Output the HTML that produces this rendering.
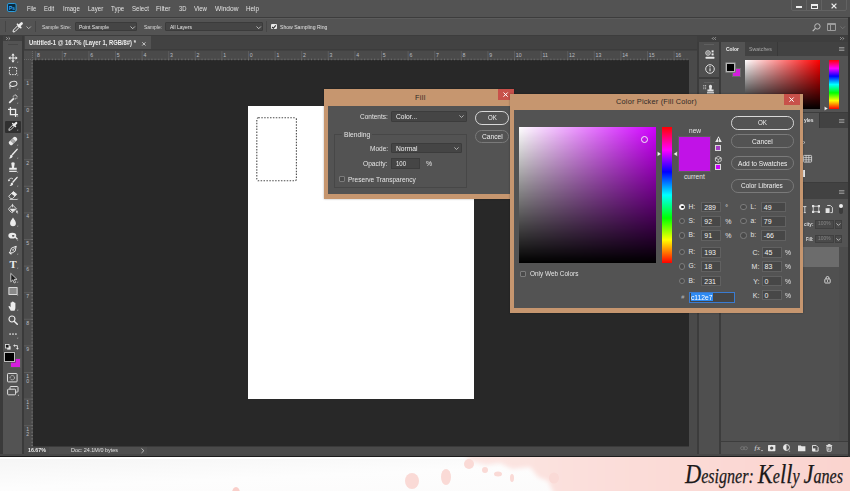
<!DOCTYPE html>
<html><head><meta charset="utf-8"><title>Photoshop - Fill / Color Picker</title>
<style>
*{box-sizing:border-box;margin:0;padding:0}
html,body{width:850px;height:491px;overflow:hidden;background:#fdfcfc}
body{position:relative;font-family:"Liberation Sans",sans-serif;font-size:7px;color:#ddd;line-height:1}
.a{position:absolute}
.t{position:absolute;white-space:nowrap;line-height:1}
svg{overflow:visible}
</style></head><body>
<div class="a" style="left:0.00px;top:0.00px;width:850.00px;height:457.00px;background:#3a3a3a;"></div>
<!-- menu bar -->
<div class="a" style="left:0.00px;top:0.00px;width:850.00px;height:17.00px;background:#535353;"></div>
<div class="a" style="left:0.00px;top:16.50px;width:850.00px;height:1.00px;background:#3d3d3d;"></div>
<svg class="a" style="left:7.20px;top:3.40px;" width="9.6" height="9" viewBox="0 0 9.6 9"><rect x="0.5" y="0.5" width="8.6" height="8" rx="1.4" fill="#0b2c40" stroke="#2c9fe0" stroke-width="1"/><text x="1.9" y="6.6" font-size="5" font-weight="bold" font-family="Liberation Sans, sans-serif" fill="#31a8ff">Ps</text></svg>
<span class="t" style="left:26.90px;top:4.61px;font-size:7.20px;color:#e2e2e2;transform:scaleX(0.8016);transform-origin:0 0;">File</span>
<span class="t" style="left:44.20px;top:4.61px;font-size:7.20px;color:#e2e2e2;transform:scaleX(0.8221);transform-origin:0 0;">Edit</span>
<span class="t" style="left:63.10px;top:4.61px;font-size:7.20px;color:#e2e2e2;transform:scaleX(0.8395);transform-origin:0 0;">Image</span>
<span class="t" style="left:87.80px;top:4.61px;font-size:7.20px;color:#e2e2e2;transform:scaleX(0.8439);transform-origin:0 0;">Layer</span>
<span class="t" style="left:110.70px;top:4.61px;font-size:7.20px;color:#e2e2e2;transform:scaleX(0.8456);transform-origin:0 0;">Type</span>
<span class="t" style="left:131.50px;top:4.61px;font-size:7.20px;color:#e2e2e2;transform:scaleX(0.8495);transform-origin:0 0;">Select</span>
<span class="t" style="left:156.00px;top:4.61px;font-size:7.20px;color:#e2e2e2;transform:scaleX(0.9062);transform-origin:0 0;">Filter</span>
<span class="t" style="left:178.50px;top:4.61px;font-size:7.20px;color:#e2e2e2;transform:scaleX(0.8148);transform-origin:0 0;">3D</span>
<span class="t" style="left:194.00px;top:4.61px;font-size:7.20px;color:#e2e2e2;transform:scaleX(0.8400);transform-origin:0 0;">View</span>
<span class="t" style="left:214.50px;top:4.61px;font-size:7.20px;color:#e2e2e2;transform:scaleX(0.9177);transform-origin:0 0;">Window</span>
<span class="t" style="left:245.50px;top:4.61px;font-size:7.20px;color:#e2e2e2;transform:scaleX(0.8779);transform-origin:0 0;">Help</span>
<div class="a" style="left:791.00px;top:-1.00px;width:56.00px;height:11.50px;border:1px solid #626262;border-radius:0 0 2px 2px"></div>
<div class="a" style="left:806.00px;top:0.00px;width:1.00px;height:10.00px;background:#626262;"></div>
<div class="a" style="left:821.00px;top:0.00px;width:1.00px;height:10.00px;background:#626262;"></div>
<div class="a" style="left:796.00px;top:6.00px;width:6.00px;height:2.00px;background:#ececec;"></div>
<div class="a" style="left:811.00px;top:3.50px;width:6.50px;height:5.00px;border:1px solid #ececec;border-top-width:2px"></div>
<svg class="a" style="left:830.50px;top:2.50px;" width="6" height="6" viewBox="0 0 6 6"><path d="M0.6 0.6L5.4 5.4M5.4 0.6L0.6 5.4" stroke="#ececec" stroke-width="1.3"/></svg>
<!-- options bar -->
<div class="a" style="left:0.00px;top:17.50px;width:850.00px;height:17.50px;background:#535353;border-top:1px solid #5c5c5c"></div>
<div class="a" style="left:0.00px;top:35.00px;width:850.00px;height:1.00px;background:#3d3d3d;"></div>
<div class="a" style="left:5.00px;top:21.00px;width:1.00px;height:11.00px;background:#454545;"></div>
<div class="a" style="left:35.00px;top:21.00px;width:1.00px;height:11.00px;background:#454545;"></div>
<div class="a" style="left:266.00px;top:21.00px;width:1.00px;height:11.00px;background:#474747;"></div>
<svg class="a" style="left:12.00px;top:20.50px;" width="12" height="12" viewBox="0 0 12 12"><path d="M1 11l.4-2 4.8-4.8 1.6 1.6L3 10.6z" fill="none" stroke="#ececec" stroke-width="1"/><path d="M5.4 3.2l3.4 3.4" stroke="#ececec" stroke-width="1.6" stroke-linecap="round"/><path d="M7 5l2.6-2.6" stroke="#ececec" stroke-width="2.6" stroke-linecap="round"/></svg>
<svg class="a" style="left:26.00px;top:25.50px;" width="5.4" height="3.4" viewBox="0 0 5.4 3.4"><path d="M0.5 0.5L2.7 2.7L4.9 0.5" fill="none" stroke="#c0c0c0" stroke-width="0.9"/></svg>
<span class="t" style="left:41.50px;top:23.55px;font-size:6.20px;color:#dcdcdc;transform:scaleX(0.8021);transform-origin:0 0;">Sample Size:</span>
<div class="a" style="left:75.00px;top:22.20px;width:61.50px;height:9.30px;background:#454545;border:1px solid #3b3b3b;border-radius:1px"></div>
<span class="t" style="left:78.70px;top:23.55px;font-size:6.20px;color:#e6e6e6;transform:scaleX(0.8135);transform-origin:0 0;">Point Sample</span>
<svg class="a" style="left:129.50px;top:25.80px;" width="5.4" height="3.4" viewBox="0 0 5.4 3.4"><path d="M0.5 0.5L2.7 2.7L4.9 0.5" fill="none" stroke="#c8c8c8" stroke-width="0.9"/></svg>
<span class="t" style="left:143.50px;top:23.55px;font-size:6.20px;color:#dcdcdc;transform:scaleX(0.7914);transform-origin:0 0;">Sample:</span>
<div class="a" style="left:165.00px;top:22.20px;width:97.50px;height:9.30px;background:#454545;border:1px solid #3b3b3b;border-radius:1px"></div>
<span class="t" style="left:170.00px;top:23.55px;font-size:6.20px;color:#e6e6e6;transform:scaleX(0.8081);transform-origin:0 0;">All Layers</span>
<svg class="a" style="left:255.50px;top:25.80px;" width="5.4" height="3.4" viewBox="0 0 5.4 3.4"><path d="M0.5 0.5L2.7 2.7L4.9 0.5" fill="none" stroke="#c8c8c8" stroke-width="0.9"/></svg>
<div class="a" style="left:271.00px;top:23.70px;width:5.80px;height:5.80px;background:#e9e9e9;border-radius:1px"></div>
<svg class="a" style="left:271.00px;top:23.70px;" width="5.8" height="5.8" viewBox="0 0 5.8 5.8"><path d="M1.1 3L2.4 4.3L4.8 1.4" fill="none" stroke="#2d2d2d" stroke-width="1.1"/></svg>
<span class="t" style="left:280.00px;top:23.55px;font-size:6.20px;color:#e2e2e2;transform:scaleX(0.8253);transform-origin:0 0;">Show Sampling Ring</span>
<svg class="a" style="left:811.50px;top:22.80px;" width="9" height="9" viewBox="0 0 9 9"><circle cx="5.4" cy="3.4" r="2.7" fill="none" stroke="#bdbdbd" stroke-width="1"/><path d="M3.4 5.4L0.7 8.1" stroke="#bdbdbd" stroke-width="1.2"/></svg>
<div class="a" style="left:826.70px;top:23.30px;width:9.30px;height:7.70px;border:1px solid #9c9c9c;border-top-width:2px;border-radius:1px"></div>
<div class="a" style="left:829.70px;top:25.30px;width:1.00px;height:5.00px;background:#9c9c9c;"></div>
<svg class="a" style="left:840.00px;top:26.00px;" width="5.4" height="3.4" viewBox="0 0 5.4 3.4"><path d="M0.5 0.5L2.7 2.7L4.9 0.5" fill="none" stroke="#777" stroke-width="0.9"/></svg>
<!-- document tab bar -->
<div class="a" style="left:24.00px;top:36.00px;width:673.00px;height:14.50px;background:#424242;"></div>
<div class="a" style="left:24.50px;top:35.80px;width:126.00px;height:13.20px;background:#535353;"></div>
<div class="a" style="left:24.00px;top:49.00px;width:673.00px;height:1.40px;background:#3c3c3c;"></div>
<span class="t" style="left:29.30px;top:40.38px;font-size:6.40px;color:#ececec;transform:scaleX(0.9165);transform-origin:0 0;font-weight:bold;">Untitled-1 @ 16.7% (Layer 1, RGB/8#) *</span>
<svg class="a" style="left:141.60px;top:41.50px;" width="3.8" height="3.8" viewBox="0 0 3.8 3.8"><path d="M0.3 0.3L3.5 3.5M3.5 0.3L0.3 3.5" stroke="#d4d4d4" stroke-width="0.9"/></svg>
<!-- rulers + canvas -->
<div class="a" style="left:24.00px;top:50.50px;width:673.00px;height:9.50px;background:#4a4a4a;"></div>
<div class="a" style="left:24.00px;top:60.00px;width:9.00px;height:386.40px;background:#4a4a4a;"></div>
<div class="a" style="left:24.00px;top:50.50px;width:9.00px;height:9.50px;background:#4e4e4e;border-right:1px dotted #686868;border-bottom:1px dotted #686868"></div>
<div class="a" style="left:33.00px;top:60.00px;width:655.80px;height:385.80px;background:#282828;"></div>
<div class="a" style="left:688.80px;top:60.00px;width:8.40px;height:394.00px;background:#4a4a4a;"></div>
<svg class="a" style="left:33.00px;top:50.50px;" width="656" height="9.5" viewBox="0 0 656 9.5"><defs><pattern id="hp" x="2.20" y="0" width="26.60" height="9.5" patternUnits="userSpaceOnUse"><g fill="#7a7a7a"><rect x="0" y="0" width="0.8" height="9.5" fill="#606060"/><rect x="0.000" y="7.8" width="0.8" height="1.7"/><rect x="3.325" y="7.8" width="0.8" height="1.7"/><rect x="6.650" y="7.8" width="0.8" height="1.7"/><rect x="9.975" y="7.8" width="0.8" height="1.7"/><rect x="13.300" y="7.8" width="0.8" height="1.7"/><rect x="16.625" y="7.8" width="0.8" height="1.7"/><rect x="19.950" y="7.8" width="0.8" height="1.7"/><rect x="23.275" y="7.8" width="0.8" height="1.7"/></g></pattern></defs><rect width="656" height="9.5" fill="url(#hp)"/></svg>
<svg class="a" style="left:24.00px;top:60.00px;" width="9" height="386" viewBox="0 0 9 386"><defs><pattern id="vp" x="0" y="19.40" width="9" height="26.60" patternUnits="userSpaceOnUse"><g fill="#7a7a7a"><rect x="0" y="0" width="9" height="0.8" fill="#606060"/><rect x="7.3" y="0.000" width="1.7" height="0.8"/><rect x="7.3" y="3.325" width="1.7" height="0.8"/><rect x="7.3" y="6.650" width="1.7" height="0.8"/><rect x="7.3" y="9.975" width="1.7" height="0.8"/><rect x="7.3" y="13.300" width="1.7" height="0.8"/><rect x="7.3" y="16.625" width="1.7" height="0.8"/><rect x="7.3" y="19.950" width="1.7" height="0.8"/><rect x="7.3" y="23.275" width="1.7" height="0.8"/></g></pattern></defs><rect width="9" height="386" fill="url(#vp)"/></svg>
<span class="t" style="left:37.00px;top:52.80px;font-size:5.20px;color:#b9bcc2;">8</span>
<span class="t" style="left:63.60px;top:52.80px;font-size:5.20px;color:#b9bcc2;">7</span>
<span class="t" style="left:90.20px;top:52.80px;font-size:5.20px;color:#b9bcc2;">6</span>
<span class="t" style="left:116.80px;top:52.80px;font-size:5.20px;color:#b9bcc2;">5</span>
<span class="t" style="left:143.40px;top:52.80px;font-size:5.20px;color:#b9bcc2;">4</span>
<span class="t" style="left:170.00px;top:52.80px;font-size:5.20px;color:#b9bcc2;">3</span>
<span class="t" style="left:196.60px;top:52.80px;font-size:5.20px;color:#b9bcc2;">2</span>
<span class="t" style="left:223.20px;top:52.80px;font-size:5.20px;color:#b9bcc2;">1</span>
<span class="t" style="left:249.80px;top:52.80px;font-size:5.20px;color:#b9bcc2;">0</span>
<span class="t" style="left:276.40px;top:52.80px;font-size:5.20px;color:#b9bcc2;">1</span>
<span class="t" style="left:303.00px;top:52.80px;font-size:5.20px;color:#b9bcc2;">2</span>
<span class="t" style="left:329.60px;top:52.80px;font-size:5.20px;color:#b9bcc2;">3</span>
<span class="t" style="left:356.20px;top:52.80px;font-size:5.20px;color:#b9bcc2;">4</span>
<span class="t" style="left:382.80px;top:52.80px;font-size:5.20px;color:#b9bcc2;">5</span>
<span class="t" style="left:409.40px;top:52.80px;font-size:5.20px;color:#b9bcc2;">6</span>
<span class="t" style="left:436.00px;top:52.80px;font-size:5.20px;color:#b9bcc2;">7</span>
<span class="t" style="left:462.60px;top:52.80px;font-size:5.20px;color:#b9bcc2;">8</span>
<span class="t" style="left:489.20px;top:52.80px;font-size:5.20px;color:#b9bcc2;">9</span>
<span class="t" style="left:515.80px;top:52.80px;font-size:5.20px;color:#b9bcc2;">10</span>
<span class="t" style="left:542.40px;top:52.80px;font-size:5.20px;color:#b9bcc2;">11</span>
<span class="t" style="left:569.00px;top:52.80px;font-size:5.20px;color:#b9bcc2;">12</span>
<span class="t" style="left:595.60px;top:52.80px;font-size:5.20px;color:#b9bcc2;">13</span>
<span class="t" style="left:622.20px;top:52.80px;font-size:5.20px;color:#b9bcc2;">14</span>
<span class="t" style="left:648.80px;top:52.80px;font-size:5.20px;color:#b9bcc2;">15</span>
<span class="t" style="left:675.40px;top:52.80px;font-size:5.20px;color:#b9bcc2;">16</span>
<span class="t" style="left:26.30px;top:81.20px;font-size:5.20px;color:#b9bcc2;">1</span>
<span class="t" style="left:26.30px;top:107.80px;font-size:5.20px;color:#b9bcc2;">0</span>
<span class="t" style="left:26.30px;top:134.40px;font-size:5.20px;color:#b9bcc2;">1</span>
<span class="t" style="left:26.30px;top:161.00px;font-size:5.20px;color:#b9bcc2;">2</span>
<span class="t" style="left:26.30px;top:187.60px;font-size:5.20px;color:#b9bcc2;">3</span>
<span class="t" style="left:26.30px;top:214.20px;font-size:5.20px;color:#b9bcc2;">4</span>
<span class="t" style="left:26.30px;top:240.80px;font-size:5.20px;color:#b9bcc2;">5</span>
<span class="t" style="left:26.30px;top:267.40px;font-size:5.20px;color:#b9bcc2;">6</span>
<span class="t" style="left:26.30px;top:294.00px;font-size:5.20px;color:#b9bcc2;">7</span>
<span class="t" style="left:26.30px;top:320.60px;font-size:5.20px;color:#b9bcc2;">8</span>
<span class="t" style="left:26.30px;top:347.20px;font-size:5.20px;color:#b9bcc2;">9</span>
<span class="t" style="left:26.30px;top:373.80px;font-size:5.20px;color:#b9bcc2;">1</span>
<span class="t" style="left:26.30px;top:378.80px;font-size:5.20px;color:#b9bcc2;">0</span>
<span class="t" style="left:26.30px;top:400.40px;font-size:5.20px;color:#b9bcc2;">1</span>
<span class="t" style="left:26.30px;top:405.40px;font-size:5.20px;color:#b9bcc2;">1</span>
<span class="t" style="left:26.30px;top:427.00px;font-size:5.20px;color:#b9bcc2;">1</span>
<span class="t" style="left:26.30px;top:432.00px;font-size:5.20px;color:#b9bcc2;">2</span>
<div class="a" style="left:248.00px;top:106.00px;width:226.00px;height:293.00px;background:#ffffff;"></div>
<svg class="a" style="left:256.00px;top:117.40px;" width="41" height="64.6" viewBox="0 0 41 64.6"><rect x="0.8" y="0.8" width="39.6" height="63" rx="1.6" fill="none" stroke="#4c4c4c" stroke-width="1.1" stroke-dasharray="1.5 1.4"/></svg>
<div class="a" style="left:24.00px;top:446.20px;width:673.00px;height:7.80px;background:#4a4a4a;"></div>
<div class="a" style="left:33.00px;top:445.80px;width:656.00px;height:0.70px;background:#3a3a3a;"></div>
<div class="a" style="left:48.50px;top:446.60px;width:98.50px;height:7.40px;background:#4f4f4f;"></div>
<span class="t" style="left:27.60px;top:447.79px;font-size:5.80px;color:#ececec;transform:scaleX(0.9049);transform-origin:0 0;font-weight:bold;">16.67%</span>
<span class="t" style="left:70.50px;top:447.79px;font-size:5.80px;color:#e0e0e0;transform:scaleX(0.9406);transform-origin:0 0;">Doc: 24.1M/0 bytes</span>
<svg class="a" style="left:141.00px;top:447.80px;" width="3.5" height="5.4" viewBox="0 0 3.5 5.4"><path d="M0.5 0.5L2.9 2.7L0.5 4.9" fill="none" stroke="#cfcfcf" stroke-width="0.8"/></svg>
<div class="a" style="left:0.00px;top:454.00px;width:850.00px;height:1.90px;background:#484848;"></div>
<div class="a" style="left:0.00px;top:455.80px;width:850.00px;height:1.20px;background:#1c1c1c;"></div>
<!-- tools panel -->
<div class="a" style="left:0.00px;top:36.00px;width:24.00px;height:418.00px;background:#3a3a3a;"></div>
<div class="a" style="left:2.80px;top:36.00px;width:19.40px;height:418.00px;background:#535353;"></div>
<div class="a" style="left:2.80px;top:36.00px;width:19.40px;height:5.00px;background:#404040;"></div>
<svg class="a" style="left:6.00px;top:37.30px;" width="5" height="3" viewBox="0 0 5 3"><path d="M0.3 0.3L1.6 1.5L0.3 2.7M2.6 0.3L3.9 1.5L2.6 2.7" fill="none" stroke="#cfcfcf" stroke-width="0.7"/></svg>
<div class="a" style="left:8.00px;top:44.30px;width:10.00px;height:0.90px;background:#464646;"></div>
<div class="a" style="left:4.50px;top:120.50px;width:16.30px;height:12.00px;background:#303030;border-radius:1px"></div>
<svg class="a" style="left:6.70px;top:51.90px;" width="12" height="12" viewBox="0 0 14 14"><path d="M7 2.8V11.2M2.8 7H11.2" stroke="#ececec" stroke-width="1.2"/><path d="M7 1.6L9 4H5ZM7 12.4L9 10H5ZM1.6 7L4 5V9ZM12.4 7L10 5V9Z" fill="#ececec"/><path d="M11.6 12.2L13 12.2L13 10.8Z" fill="#c8c8c8"/></svg>
<svg class="a" style="left:6.70px;top:65.20px;" width="12" height="12" viewBox="0 0 14 14"><rect x="2.8" y="2.8" width="8.4" height="8.4" fill="none" stroke="#ececec" stroke-width="1.1" stroke-dasharray="1.7 1.2"/><path d="M11.6 12.2L13 12.2L13 10.8Z" fill="#c8c8c8"/></svg>
<svg class="a" style="left:6.70px;top:79.00px;" width="12" height="12" viewBox="0 0 14 14"><ellipse cx="7.4" cy="5.6" rx="4.3" ry="2.9" fill="none" stroke="#ececec" stroke-width="1.1" transform="rotate(-12 7.4 5.6)"/><path d="M3.6 7.4C2.6 8.6 3.8 9.6 3.4 11.4" fill="none" stroke="#ececec" stroke-width="1"/><path d="M11.6 12.2L13 12.2L13 10.8Z" fill="#c8c8c8"/></svg>
<svg class="a" style="left:6.70px;top:93.00px;" width="12" height="12" viewBox="0 0 14 14"><path d="M2.6 11.6L8 6.2" stroke="#ececec" stroke-width="2"/><path d="M9.6 1.4V3.4M9.6 5.8V7.6M6.6 4.5H8.4M10.8 4.5H12.6M7.6 2.4L8.6 3.4M11.6 2.4L10.6 3.4M11.6 6.6L10.6 5.6" stroke="#ececec" stroke-width="0.8"/><path d="M11.6 12.2L13 12.2L13 10.8Z" fill="#c8c8c8"/></svg>
<svg class="a" style="left:6.70px;top:106.40px;" width="12" height="12" viewBox="0 0 14 14"><path d="M4 1.2V10H12.8M1.2 4H10V12.8" fill="none" stroke="#ececec" stroke-width="1.5"/><path d="M11.6 12.2L13 12.2L13 10.8Z" fill="#c8c8c8"/></svg>
<svg class="a" style="left:6.70px;top:120.40px;" width="12" height="12" viewBox="0 0 14 14"><g transform="translate(1.2,1)"><path d="M1 11l.4-2 4.8-4.8 1.6 1.6L3 10.6z" fill="none" stroke="#ececec" stroke-width="1"/><path d="M5.4 3.2l3.4 3.4" stroke="#ececec" stroke-width="1.6" stroke-linecap="round"/><path d="M7 5l2.6-2.6" stroke="#ececec" stroke-width="2.6" stroke-linecap="round"/></g><path d="M11.6 12.2L13 12.2L13 10.8Z" fill="#c8c8c8"/></svg>
<svg class="a" style="left:6.70px;top:134.80px;" width="12" height="12" viewBox="0 0 14 14"><g transform="rotate(-45 7 7)"><rect x="1.4" y="4.4" width="11.2" height="5.2" rx="2" fill="#ececec"/><rect x="5" y="4.4" width="4" height="5.2" fill="#535353" opacity="0.55"/><circle cx="6.2" cy="6.2" r="0.45" fill="#ececec"/><circle cx="7.8" cy="6.2" r="0.45" fill="#ececec"/><circle cx="6.2" cy="7.8" r="0.45" fill="#ececec"/><circle cx="7.8" cy="7.8" r="0.45" fill="#ececec"/></g><path d="M11.6 12.2L13 12.2L13 10.8Z" fill="#c8c8c8"/></svg>
<svg class="a" style="left:6.70px;top:148.00px;" width="12" height="12" viewBox="0 0 14 14"><path d="M11.8 1.6L6.4 7.6" stroke="#ececec" stroke-width="1.7" stroke-linecap="round"/><path d="M5.6 8C4.2 7.8 3.6 9 3.6 10.2C3.4 11.2 2.6 11.8 2 12C4 12.6 6.6 11.6 6.6 9.4Z" fill="#ececec"/><path d="M11.6 12.2L13 12.2L13 10.8Z" fill="#c8c8c8"/></svg>
<svg class="a" style="left:6.70px;top:162.00px;" width="12" height="12" viewBox="0 0 14 14"><path d="M5.2 2.8a1.9 1.9 0 1 1 3.6 0C8.6 4.4 8.2 5.4 8.2 6.6H11.4V9H2.6V6.6H5.8C5.8 5.4 5.4 4.4 5.2 2.8Z" fill="#ececec"/><rect x="2.6" y="10.2" width="8.8" height="1.4" fill="#ececec"/><path d="M11.6 12.2L13 12.2L13 10.8Z" fill="#c8c8c8"/></svg>
<svg class="a" style="left:6.70px;top:175.60px;" width="12" height="12" viewBox="0 0 14 14"><path d="M11.8 1.6L7 7" stroke="#ececec" stroke-width="1.6" stroke-linecap="round"/><path d="M6.2 7.6C5 7.4 4.4 8.4 4.4 9.6C4.2 10.6 3.4 11.2 2.8 11.4C4.8 12 7.2 11 7.2 9Z" fill="#ececec"/><path d="M2 5.6A3 3 0 0 1 7 3.4" fill="none" stroke="#ececec" stroke-width="0.9"/><path d="M1 4.2L2 6.4L3.8 5Z" fill="#ececec"/><path d="M11.6 12.2L13 12.2L13 10.8Z" fill="#c8c8c8"/></svg>
<svg class="a" style="left:6.70px;top:189.40px;" width="12" height="12" viewBox="0 0 14 14"><path d="M2 8.4L7.4 3L11.4 6.2L6.4 11.2H4.2Z" fill="none" stroke="#ececec" stroke-width="1"/><path d="M7.4 3L11.4 6.2L9 8.6L5 5.4Z" fill="#ececec"/><path d="M3 12.2H12" stroke="#ececec" stroke-width="0.9"/><path d="M11.6 12.2L13 12.2L13 10.8Z" fill="#c8c8c8"/></svg>
<svg class="a" style="left:6.70px;top:202.70px;" width="12" height="12" viewBox="0 0 14 14"><path d="M2.4 6.2L6.4 2.2L11 6.8L7 10.8C6.4 11.4 5.6 11.4 5 10.8L2.4 8.2C1.8 7.6 1.8 6.8 2.4 6.2Z" fill="none" stroke="#ececec" stroke-width="1"/><path d="M3 6.6H10.6L6.4 10.6Z" fill="#ececec"/><path d="M6.4 1V5" stroke="#ececec" stroke-width="0.9"/><path d="M11.6 8.2C12.4 9.4 12.6 10 12.6 10.5A1 1 0 0 1 10.6 10.5C10.6 10 10.8 9.4 11.6 8.2Z" fill="#ececec"/><path d="M11.6 12.2L13 12.2L13 10.8Z" fill="#c8c8c8"/></svg>
<svg class="a" style="left:6.70px;top:216.40px;" width="12" height="12" viewBox="0 0 14 14"><path d="M7 1.8C8.8 4.6 10.4 6.4 10.4 8.6A3.4 3.4 0 0 1 3.6 8.6C3.6 6.4 5.2 4.6 7 1.8Z" fill="#ececec"/><path d="M11.6 12.2L13 12.2L13 10.8Z" fill="#c8c8c8"/></svg>
<svg class="a" style="left:6.70px;top:230.20px;" width="12" height="12" viewBox="0 0 14 14"><ellipse cx="6.2" cy="6.6" rx="4.6" ry="3.3" fill="#ececec"/><ellipse cx="7.2" cy="6.8" rx="1.5" ry="1.1" fill="#535353"/><path d="M9.6 8.2L12.2 10.8" stroke="#ececec" stroke-width="1.5"/><path d="M11.6 12.2L13 12.2L13 10.8Z" fill="#c8c8c8"/></svg>
<svg class="a" style="left:6.70px;top:244.00px;" width="12" height="12" viewBox="0 0 14 14"><g transform="rotate(40 7 7)"><path d="M7 1.2L9.8 6.4L8.4 10.6H5.6L4.2 6.4Z" fill="none" stroke="#ececec" stroke-width="1"/><path d="M7 1.6V6.4" stroke="#ececec" stroke-width="0.8"/><circle cx="7" cy="7" r="0.9" fill="#ececec"/><rect x="5.2" y="11.2" width="3.6" height="1.4" fill="#ececec"/></g><path d="M11.6 12.2L13 12.2L13 10.8Z" fill="#c8c8c8"/></svg>
<svg class="a" style="left:6.70px;top:258.00px;" width="12" height="12" viewBox="0 0 14 14"><text x="7" y="11.6" text-anchor="middle" font-family="Liberation Serif, serif" font-weight="bold" font-size="12.5" fill="#ececec">T</text><path d="M11.6 12.2L13 12.2L13 10.8Z" fill="#c8c8c8"/></svg>
<svg class="a" style="left:6.70px;top:271.60px;" width="12" height="12" viewBox="0 0 14 14"><path d="M4.4 1.6V11.4L6.8 9.2L8.4 12.8L10 12.1L8.4 8.6H11.6Z" fill="#1c1c1c" stroke="#ececec" stroke-width="0.9" stroke-linejoin="round"/><path d="M11.6 12.2L13 12.2L13 10.8Z" fill="#c8c8c8"/></svg>
<svg class="a" style="left:6.70px;top:285.40px;" width="12" height="12" viewBox="0 0 14 14"><rect x="2.2" y="3" width="9.6" height="8" fill="#8a8a8a" stroke="#ececec" stroke-width="1"/><path d="M11.6 12.2L13 12.2L13 10.8Z" fill="#c8c8c8"/></svg>
<svg class="a" style="left:6.70px;top:300.20px;" width="12" height="12" viewBox="0 0 14 14"><path d="M4.4 12.4C3.4 10.6 2.2 9 1.8 7.8C1.6 7 2.6 6.6 3.2 7.4L4.2 8.6V3.4C4.2 2.4 5.6 2.4 5.6 3.4V2.4C5.6 1.4 7 1.4 7 2.4V2.8C7 1.8 8.4 1.8 8.4 2.8V3.8C8.4 2.8 9.8 2.8 9.8 3.8V8.6C9.8 10.4 9.4 11.4 8.8 12.4Z" fill="#ececec"/><path d="M11.6 12.2L13 12.2L13 10.8Z" fill="#c8c8c8"/></svg>
<svg class="a" style="left:6.70px;top:314.00px;" width="12" height="12" viewBox="0 0 14 14"><circle cx="5.8" cy="5.8" r="3.5" fill="none" stroke="#ececec" stroke-width="1.3"/><path d="M8.4 8.4L12 12" stroke="#ececec" stroke-width="1.7" stroke-linecap="round"/></svg>
<svg class="a" style="left:6.70px;top:327.80px;" width="12" height="12" viewBox="0 0 14 14"><circle cx="3.6" cy="7" r="1" fill="#ececec"/><circle cx="7" cy="7" r="1" fill="#ececec"/><circle cx="10.4" cy="7" r="1" fill="#ececec"/><path d="M11.6 12.2L13 12.2L13 10.8Z" fill="#c8c8c8"/></svg>
<svg class="a" style="left:4.60px;top:343.60px;" width="6" height="6" viewBox="0 0 6 6"><rect x="2.2" y="2.2" width="3.4" height="3.4" fill="#e6e6e6"/><rect x="0.4" y="0.4" width="3.6" height="3.6" fill="#1a1a1a" stroke="#e6e6e6" stroke-width="0.8"/></svg>
<svg class="a" style="left:13.40px;top:343.60px;" width="6" height="6" viewBox="0 0 6 6"><path d="M1.6 1.6H4.4V4.4" fill="none" stroke="#e6e6e6" stroke-width="0.9"/><path d="M0.2 1.6L1.9 0.2V3ZM4.4 5.8L3 4.1H5.8Z" fill="#e6e6e6"/></svg>
<div class="a" style="left:10.00px;top:358.20px;width:10.60px;height:9.60px;background:#d61de0;border:1px solid #5a5a5a"></div>
<div class="a" style="left:4.00px;top:352.00px;width:10.60px;height:9.80px;background:#000;border:1px solid #bdbdbd;box-shadow:0 0 0 0.6px #444"></div>
<svg class="a" style="left:7.20px;top:372.60px;" width="10.6" height="9.4" viewBox="0 0 10.6 9.4"><rect x="0.5" y="0.5" width="9.6" height="8.4" rx="0.8" fill="none" stroke="#dcdcdc" stroke-width="1"/><circle cx="5.3" cy="4.7" r="2.2" fill="none" stroke="#dcdcdc" stroke-width="0.9" stroke-dasharray="1.1 0.8"/></svg>
<svg class="a" style="left:7.00px;top:386.40px;" width="12" height="10" viewBox="0 0 12 10"><rect x="3" y="0.5" width="8" height="5.6" rx="0.8" fill="#535353" stroke="#dcdcdc" stroke-width="1"/><rect x="0.6" y="3.2" width="8" height="5.6" rx="0.8" fill="#535353" stroke="#dcdcdc" stroke-width="1"/><path d="M10.6 9.8L12 9.8L12 8.4Z" fill="#c8c8c8"/></svg>
<!-- right dock -->
<div class="a" style="left:697.00px;top:36.00px;width:153.00px;height:418.00px;background:#3c3c3c;"></div>
<div class="a" style="left:697.00px;top:36.00px;width:153.00px;height:5.50px;background:#3e3e3e;"></div>
<div class="a" style="left:848.00px;top:17.00px;width:2.00px;height:440.00px;background:#333;"></div>
<svg class="a" style="left:711.50px;top:37.30px;" width="4.2" height="3" viewBox="0 0 4.2 3"><path d="M1.5 0.3L0.3 1.5L1.5 2.7M3.8 0.3L2.6 1.5L3.8 2.7" fill="none" stroke="#d0d0d0" stroke-width="0.7"/></svg>
<svg class="a" style="left:840.00px;top:37.30px;" width="4.2" height="3" viewBox="0 0 4.2 3"><path d="M0.3 0.3L1.5 1.5L0.3 2.7M2.6 0.3L3.8 1.5L2.6 2.7" fill="none" stroke="#d0d0d0" stroke-width="0.7"/></svg>
<div class="a" style="left:698.60px;top:41.70px;width:20.40px;height:35.80px;background:#4f4f4f;"></div>
<div class="a" style="left:698.60px;top:79.20px;width:20.40px;height:374.80px;background:#4f4f4f;"></div>
<div class="a" style="left:703.80px;top:44.00px;width:10.60px;height:0.90px;background:#5f5f5f;"></div>
<div class="a" style="left:703.80px;top:81.50px;width:10.60px;height:0.90px;background:#5f5f5f;"></div>
<svg class="a" style="left:705.00px;top:49.60px;" width="10" height="9.2" viewBox="0 0 10 9.2"><circle cx="3" cy="3" r="2.3" fill="none" stroke="#e0e0e0" stroke-width="0.9"/><path d="M3 1.2V4.8M1.2 3H4.8" stroke="#e0e0e0" stroke-width="0.6"/><rect x="6.6" y="0.4" width="2" height="2" fill="#e8e8e8"/><rect x="6.6" y="3.4" width="2" height="2" fill="#e8e8e8"/><rect x="0.6" y="6.8" width="8.8" height="1.9" rx="0.5" fill="#e8e8e8"/></svg>
<svg class="a" style="left:704.60px;top:64.40px;" width="10" height="10" viewBox="0 0 10 10"><circle cx="5" cy="5" r="4.3" fill="none" stroke="#e0e0e0" stroke-width="1"/><circle cx="5" cy="2.8" r="0.7" fill="#e8e8e8"/><rect x="4.45" y="4.3" width="1.1" height="3" fill="#e8e8e8"/></svg>
<svg class="a" style="left:703.40px;top:84.00px;" width="11" height="10" viewBox="0 0 11 10"><path d="M0.8 1V5.6M2.6 1V5.6" stroke="#dcdcdc" stroke-width="0.8" stroke-dasharray="1 0.6"/><path d="M6 3a1.6 1.6 0 1 1 3 0C8.8 4 8.6 4.6 8.6 5.4H10.6V7.4H4.4V5.4H6.4C6.4 4.6 6.2 4 6 3Z" fill="#e4e4e4"/><rect x="4" y="8.2" width="7" height="1.2" fill="#e4e4e4"/></svg>
<div class="a" style="left:720.60px;top:41.70px;width:127.40px;height:70.50px;background:#535353;"></div>
<div class="a" style="left:744.60px;top:41.70px;width:103.40px;height:14.70px;background:#424242;"></div>
<div class="a" style="left:777.00px;top:41.70px;width:0.80px;height:14.70px;background:#393939;"></div>
<span class="t" style="left:725.50px;top:46.25px;font-size:6.20px;color:#f0f0f0;transform:scaleX(0.8031);transform-origin:0 0;font-weight:bold;">Color</span>
<span class="t" style="left:749.00px;top:46.25px;font-size:6.20px;color:#a8a8a8;transform:scaleX(0.8556);transform-origin:0 0;">Swatches</span>
<svg class="a" style="left:838.60px;top:47.20px;" width="5.4" height="4" viewBox="0 0 5.4 4"><path d="M0 0.5H5.4M0 2H5.4M0 3.5H5.4" stroke="#9c9c9c" stroke-width="0.8"/></svg>
<div class="a" style="left:731.80px;top:68.00px;width:9.20px;height:9.00px;background:#d61de0;border:0.8px solid #6a6a6a"></div>
<div class="a" style="left:726.20px;top:63.40px;width:8.60px;height:8.40px;background:#000;border:0.9px solid #b4b4b4"></div>
<div class="a" style="left:725.20px;top:62.40px;width:10.60px;height:10.40px;border:0.6px solid #777;border-radius:1px"></div>
<div class="a" style="left:744.60px;top:60.40px;width:75.60px;height:48.20px;background:linear-gradient(to top,#000,rgba(0,0,0,0)),linear-gradient(to right,#fff,#f00)"></div>
<div class="a" style="left:829.00px;top:60.40px;width:10.00px;height:48.20px;background:linear-gradient(to bottom,#f00 0%,#f0f 17%,#00f 33%,#0ff 50%,#0f0 67%,#ff0 83%,#f00 100%)"></div>
<svg class="a" style="left:823.50px;top:105.60px;" width="4.5" height="5" viewBox="0 0 4.5 5"><path d="M0.3 0.3L4.2 2.5L0.3 4.7Z" fill="#f2f2f2" stroke="#333" stroke-width="0.4"/></svg>
<div class="a" style="left:720.60px;top:112.80px;width:127.40px;height:69.20px;background:#535353;"></div>
<div class="a" style="left:720.60px;top:112.80px;width:127.40px;height:15.40px;background:#424242;"></div>
<div class="a" style="left:790.00px;top:113.40px;width:29.00px;height:14.80px;background:#535353;"></div>
<div class="a" style="left:819.00px;top:112.80px;width:0.80px;height:15.40px;background:#393939;"></div>
<span class="t" style="left:803.50px;top:117.15px;font-size:6.20px;color:#e4e4e4;transform:scaleX(0.7873);transform-origin:0 0;font-weight:bold;">yles</span>
<svg class="a" style="left:838.80px;top:119.00px;" width="5.4" height="4" viewBox="0 0 5.4 4"><path d="M0 0.5H5.4M0 2H5.4M0 3.5H5.4" stroke="#9c9c9c" stroke-width="0.8"/></svg>
<svg class="a" style="left:803.00px;top:155.00px;" width="9" height="7.5" viewBox="0 0 9 7.5"><rect x="0.4" y="0.4" width="8.2" height="6.7" rx="0.8" fill="none" stroke="#e0e0e0" stroke-width="0.8"/><path d="M3.1 0.4V7.1M5.8 0.4V7.1M0.4 2.6H8.6M0.4 4.8H8.6" stroke="#e0e0e0" stroke-width="0.7"/></svg>
<div class="a" style="left:803.00px;top:170.00px;width:2.00px;height:7.00px;background:#e8e8e8;"></div>
<svg class="a" style="left:803.00px;top:141.00px;" width="2.4" height="3" viewBox="0 0 2.4 3"><path d="M0.3 0.3L2 1.5L0.3 2.7" fill="none" stroke="#e0e0e0" stroke-width="0.7"/></svg>
<div class="a" style="left:720.60px;top:183.00px;width:127.40px;height:271.00px;background:#535353;"></div>
<div class="a" style="left:720.60px;top:183.00px;width:127.40px;height:15.60px;background:#424242;"></div>
<div class="a" style="left:750.00px;top:183.50px;width:46.00px;height:15.10px;background:#535353;"></div>
<svg class="a" style="left:838.80px;top:189.60px;" width="5.4" height="4" viewBox="0 0 5.4 4"><path d="M0 0.5H5.4M0 2H5.4M0 3.5H5.4" stroke="#9c9c9c" stroke-width="0.8"/></svg>
<svg class="a" style="left:811.50px;top:205.40px;" width="8" height="8" viewBox="0 0 8 8"><rect x="1.2" y="1.2" width="5.6" height="5.6" fill="none" stroke="#e0e0e0" stroke-width="0.8"/><rect x="0" y="0" width="2.2" height="2.2" fill="#e0e0e0"/><rect x="5.8" y="0" width="2.2" height="2.2" fill="#e0e0e0"/><rect x="0" y="5.8" width="2.2" height="2.2" fill="#e0e0e0"/><rect x="5.8" y="5.8" width="2.2" height="2.2" fill="#e0e0e0"/></svg>
<svg class="a" style="left:825.40px;top:205.00px;" width="8" height="8.6" viewBox="0 0 8 8.6"><path d="M0.6 3.2H4.6V8H0.6Z" fill="#e4e4e4"/><path d="M2.2 0.5H5.4L7.4 2.5V7.6H5.4" fill="none" stroke="#e4e4e4" stroke-width="0.9"/></svg>
<div class="a" style="left:838.60px;top:204.40px;width:4.40px;height:10.00px;background:#3c3c3c;border-radius:2.2px"></div>
<div class="a" style="left:838.80px;top:204.40px;width:4.00px;height:4.00px;background:#f0f0f0;border-radius:50%"></div>
<svg class="a" style="left:802.80px;top:206.00px;" width="4" height="7" viewBox="0 0 4 7"><path d="M0 0.6H3.4M1.8 0.6V6.6M0.8 6.6H2.8" stroke="#e0e0e0" stroke-width="0.9" fill="none"/></svg>
<span class="t" style="left:803.60px;top:220.92px;font-size:6.00px;color:#dcdcdc;transform:scaleX(0.7619);transform-origin:0 0;font-weight:bold;">city:</span>
<div class="a" style="left:815.40px;top:219.80px;width:18.30px;height:8.80px;background:#4a4a4a;border:1px solid #404040"></div>
<span class="t" style="left:818.00px;top:221.39px;font-size:5.80px;color:#858585;transform:scaleX(0.8426);transform-origin:0 0;">100%</span>
<div class="a" style="left:835.00px;top:219.80px;width:7.40px;height:8.80px;background:#4a4a4a;border:1px solid #404040"></div>
<svg class="a" style="left:836.30px;top:223.00px;" width="4.8" height="3" viewBox="0 0 4.8 3"><path d="M0.4 0.4L2.4 2.4L4.4 0.4" fill="none" stroke="#c8c8c8" stroke-width="0.8"/></svg>
<span class="t" style="left:805.60px;top:235.92px;font-size:6.00px;color:#dcdcdc;transform:scaleX(0.6939);transform-origin:0 0;font-weight:bold;">Fill:</span>
<div class="a" style="left:815.40px;top:234.60px;width:18.30px;height:8.60px;background:#4a4a4a;border:1px solid #404040"></div>
<span class="t" style="left:818.00px;top:236.09px;font-size:5.80px;color:#858585;transform:scaleX(0.8426);transform-origin:0 0;">100%</span>
<div class="a" style="left:835.00px;top:234.60px;width:7.40px;height:8.60px;background:#4a4a4a;border:1px solid #404040"></div>
<svg class="a" style="left:836.30px;top:237.80px;" width="4.8" height="3" viewBox="0 0 4.8 3"><path d="M0.4 0.4L2.4 2.4L4.4 0.4" fill="none" stroke="#c8c8c8" stroke-width="0.8"/></svg>
<div class="a" style="left:720.60px;top:247.00px;width:118.20px;height:194.00px;background:#505050;"></div>
<div class="a" style="left:720.60px;top:247.30px;width:118.20px;height:19.40px;background:#6c6c6c;"></div>
<div class="a" style="left:838.80px;top:247.00px;width:9.20px;height:194.00px;background:#4d4d4d;"></div>
<svg class="a" style="left:823.60px;top:276.40px;" width="7" height="7.4" viewBox="0 0 7 7.4"><rect x="0.8" y="3" width="5.4" height="4" rx="0.6" fill="none" stroke="#e0e0e0" stroke-width="0.9"/><path d="M2 3V2A1.5 1.5 0 0 1 5 2V3" fill="none" stroke="#e0e0e0" stroke-width="0.9"/><rect x="3.1" y="4.2" width="0.9" height="1.6" fill="#e0e0e0"/></svg>
<div class="a" style="left:720.60px;top:441.40px;width:127.40px;height:12.60px;background:#535353;"></div>
<div class="a" style="left:720.60px;top:441.20px;width:127.40px;height:0.80px;background:#3d3d3d;"></div>
<svg class="a" style="left:739.60px;top:446.00px;" width="8" height="4.4" viewBox="0 0 8 4.4"><ellipse cx="2.4" cy="2.2" rx="1.9" ry="1.5" fill="none" stroke="#7a7a7a" stroke-width="0.8"/><ellipse cx="5.6" cy="2.2" rx="1.9" ry="1.5" fill="none" stroke="#7a7a7a" stroke-width="0.8"/></svg>
<span class="t" style="left:754.60px;top:444.67px;font-size:7.00px;color:#e6e6e6;letter-spacing:0.378px;font-style:italic;font-family:'Liberation Serif',serif;">fx</span>
<svg class="a" style="left:761.00px;top:450.00px;" width="2" height="1.6" viewBox="0 0 2 1.6"><path d="M0 0H2L1 1.4Z" fill="#ccc"/></svg>
<svg class="a" style="left:768.40px;top:444.80px;" width="7.4" height="6.2" viewBox="0 0 7.4 6.2"><rect x="0" y="0" width="7.4" height="6.2" rx="0.6" fill="#e6e6e6"/><circle cx="3.7" cy="3.1" r="1.7" fill="#535353"/></svg>
<svg class="a" style="left:783.40px;top:444.40px;" width="7.4" height="7.4" viewBox="0 0 7.4 7.4"><circle cx="3.5" cy="3.5" r="3" fill="none" stroke="#e6e6e6" stroke-width="0.9"/><path d="M3.5 0.5A3 3 0 0 0 3.5 6.5Z" fill="#e6e6e6"/><path d="M5.6 7.6H7.4L6.5 6.4Z" fill="#ccc"/></svg>
<svg class="a" style="left:797.60px;top:444.80px;" width="7.4" height="6.2" viewBox="0 0 7.4 6.2"><path d="M0 0.4H2.8L3.6 1.3H7.4V6.2H0Z" fill="#e6e6e6"/></svg>
<svg class="a" style="left:811.80px;top:444.60px;" width="6.6" height="6.6" viewBox="0 0 6.6 6.6"><path d="M0.5 0.5H4.2L6.1 2.4V6.1H0.5Z" fill="none" stroke="#e6e6e6" stroke-width="0.9"/><path d="M0.5 3.4H3.4V6.1H0.5Z" fill="#e6e6e6"/></svg>
<svg class="a" style="left:826.40px;top:444.20px;" width="6.4" height="7.4" viewBox="0 0 6.4 7.4"><path d="M0.2 1.5H6.2M2.2 1.5V0.5H4.2V1.5" fill="none" stroke="#e6e6e6" stroke-width="0.9"/><path d="M0.9 2.4H5.5L5.1 7.2H1.3Z" fill="none" stroke="#e6e6e6" stroke-width="0.9"/><path d="M2.5 3.4V6.2M3.9 3.4V6.2" stroke="#e6e6e6" stroke-width="0.6"/></svg>
<!-- Fill dialog -->
<div class="a" style="left:323.60px;top:89.20px;width:190.00px;height:109.60px;background:#c6966f;box-shadow:0 0 2px rgba(0,0,0,0.3)"></div>
<div class="a" style="left:328.00px;top:105.80px;width:186.00px;height:88.00px;background:#535353;"></div>
<span class="t" style="left:415.00px;top:93.54px;font-size:7.40px;color:#2f2b28;letter-spacing:0.287px;">Fill</span>
<div class="a" style="left:498.00px;top:89.20px;width:15.50px;height:10.60px;background:#c8514a;"></div>
<svg class="a" style="left:503.15px;top:91.90px;" width="5.2" height="5.2" viewBox="0 0 5.2 5.2"><path d="M0.5 0.5L4.7 4.7M4.7 0.5L0.5 4.7" stroke="#fff" stroke-width="1"/></svg>
<span class="t" style="left:359.90px;top:112.87px;font-size:7.00px;color:#e4e4e4;transform:scaleX(0.9278);transform-origin:0 0;">Contents:</span>
<div class="a" style="left:391.00px;top:111.40px;width:76.20px;height:10.80px;background:#454545;border:1px solid #3c3c3c;border-radius:1px"></div>
<span class="t" style="left:395.80px;top:112.87px;font-size:7.00px;color:#f0f0f0;transform:scaleX(0.9560);transform-origin:0 0;">Color...</span>
<svg class="a" style="left:459.40px;top:115.40px;" width="5" height="3.2" viewBox="0 0 5 3.2"><path d="M0.4 0.4L2.5 2.5L4.6 0.4" fill="none" stroke="#c8c8c8" stroke-width="0.8"/></svg>
<div class="a" style="left:474.80px;top:110.70px;width:34.00px;height:13.90px;border:1.4px solid #d8d8d8;border-radius:6.95px"></div>
<span class="t" style="left:487.60px;top:114.27px;font-size:7.00px;color:#f0f0f0;transform:scaleX(0.8701);transform-origin:0 0;">OK</span>
<div class="a" style="left:474.80px;top:129.50px;width:34.00px;height:13.70px;border:1px solid #7a7a7a;border-radius:6.85px"></div>
<span class="t" style="left:481.60px;top:133.07px;font-size:7.00px;color:#f0f0f0;transform:scaleX(0.9454);transform-origin:0 0;">Cancel</span>
<div class="a" style="left:334.00px;top:133.90px;width:133.20px;height:54.30px;border:1px solid #474747"></div>
<div class="a" style="left:342.40px;top:130.00px;width:30.00px;height:8.00px;background:#535353;"></div>
<span class="t" style="left:344.40px;top:131.47px;font-size:7.00px;color:#e4e4e4;transform:scaleX(0.9616);transform-origin:0 0;">Blending</span>
<span class="t" style="left:369.60px;top:144.67px;font-size:7.00px;color:#e4e4e4;transform:scaleX(0.9303);transform-origin:0 0;">Mode:</span>
<div class="a" style="left:391.00px;top:142.70px;width:70.80px;height:10.80px;background:#454545;border:1px solid #3c3c3c;border-radius:1px"></div>
<span class="t" style="left:395.80px;top:144.67px;font-size:7.00px;color:#f0f0f0;transform:scaleX(0.9530);transform-origin:0 0;">Normal</span>
<svg class="a" style="left:454.40px;top:146.80px;" width="5" height="3.2" viewBox="0 0 5 3.2"><path d="M0.4 0.4L2.5 2.5L4.6 0.4" fill="none" stroke="#c8c8c8" stroke-width="0.8"/></svg>
<span class="t" style="left:363.30px;top:160.27px;font-size:7.00px;color:#e4e4e4;transform:scaleX(0.9503);transform-origin:0 0;">Opacity:</span>
<div class="a" style="left:391.00px;top:157.90px;width:29.20px;height:10.70px;background:#454545;border:1px solid #3c3c3c"></div>
<span class="t" style="left:395.50px;top:160.27px;font-size:7.00px;color:#f0f0f0;transform:scaleX(0.8648);transform-origin:0 0;">100</span>
<span class="t" style="left:425.90px;top:160.27px;font-size:7.00px;color:#e4e4e4;transform:scaleX(0.9801);transform-origin:0 0;">%</span>
<div class="a" style="left:339.00px;top:176.00px;width:5.70px;height:5.70px;background:#4a4a4a;border:1px solid #7c7c7c;border-radius:1px"></div>
<span class="t" style="left:348.00px;top:175.67px;font-size:7.00px;color:#e4e4e4;transform:scaleX(0.9369);transform-origin:0 0;">Preserve Transparency</span>
<!-- Color Picker dialog -->
<div class="a" style="left:510.20px;top:94.00px;width:292.60px;height:218.60px;background:#c6966f;box-shadow:0 0 2px rgba(0,0,0,0.3)"></div>
<div class="a" style="left:514.10px;top:109.80px;width:285.70px;height:198.40px;background:#535353;"></div>
<span class="t" style="left:616.00px;top:98.34px;font-size:7.40px;color:#2f2b28;letter-spacing:0.181px;">Color Picker (Fill Color)</span>
<div class="a" style="left:783.70px;top:94.00px;width:16.10px;height:10.80px;background:#c8514a;"></div>
<svg class="a" style="left:789.15px;top:96.80px;" width="5.2" height="5.2" viewBox="0 0 5.2 5.2"><path d="M0.5 0.5L4.7 4.7M4.7 0.5L0.5 4.7" stroke="#fff" stroke-width="1"/></svg>
<div class="a" style="left:519.20px;top:127.00px;width:136.40px;height:136.20px;background:linear-gradient(to top,#000,rgba(0,0,0,0)),linear-gradient(to right,#fff,#d000ff)"></div>
<div class="a" style="left:640.80px;top:136.10px;width:7.20px;height:7.20px;border:1px solid #f4f4f4;border-radius:50%"></div>
<div class="a" style="left:662.30px;top:127.00px;width:9.80px;height:136.20px;background:linear-gradient(to bottom,#f00 0%,#f0f 17%,#00f 33%,#0ff 50%,#0f0 67%,#ff0 83%,#f00 100%)"></div>
<svg class="a" style="left:656.80px;top:151.20px;" width="4.6" height="5.8" viewBox="0 0 4.6 5.8"><path d="M0.3 0.3L4.3 2.9L0.3 5.5Z" fill="#f2f2f2" stroke="#333" stroke-width="0.4"/></svg>
<svg class="a" style="left:672.80px;top:151.20px;" width="4.6" height="5.8" viewBox="0 0 4.6 5.8"><path d="M4.3 0.3L0.3 2.9L4.3 5.5Z" fill="#f2f2f2" stroke="#333" stroke-width="0.4"/></svg>
<span class="t" style="left:688.50px;top:128.31px;font-size:6.60px;color:#e4e4e4;transform:scaleX(0.9993);transform-origin:0 0;">new</span>
<div class="a" style="left:678.20px;top:135.50px;width:32.50px;height:36.40px;background:#c112e7;border:0.7px solid #5e5e5e"></div>
<span class="t" style="left:684.00px;top:174.01px;font-size:6.60px;color:#e4e4e4;letter-spacing:0.065px;">current</span>
<svg class="a" style="left:714.60px;top:135.60px;" width="7" height="6.4" viewBox="0 0 7 6.4"><path d="M3.5 0.3L6.8 6.1H0.2Z" fill="#e8e8e8"/><rect x="3.1" y="2.2" width="0.8" height="2.2" fill="#333"/><rect x="3.1" y="4.8" width="0.8" height="0.8" fill="#333"/></svg>
<div class="a" style="left:715.20px;top:145.00px;width:5.60px;height:5.60px;background:#a33dc4;border:0.8px solid #d8d8d8"></div>
<svg class="a" style="left:714.80px;top:155.60px;" width="6.6" height="6.8" viewBox="0 0 6.6 6.8"><path d="M3.3 0.4L6.2 1.9V4.9L3.3 6.4L0.4 4.9V1.9Z" fill="none" stroke="#e0e0e0" stroke-width="0.8"/><path d="M0.4 1.9L3.3 3.4L6.2 1.9M3.3 3.4V6.4" fill="none" stroke="#e0e0e0" stroke-width="0.7"/></svg>
<div class="a" style="left:715.20px;top:164.40px;width:5.60px;height:5.60px;background:#cc00ff;border:0.8px solid #d8d8d8"></div>
<div class="a" style="left:730.90px;top:116.00px;width:62.70px;height:13.50px;border:1.4px solid #d8d8d8;border-radius:6.75px"></div>
<span class="t" style="left:757.80px;top:119.47px;font-size:7.00px;color:#f0f0f0;transform:scaleX(0.8899);transform-origin:0 0;">OK</span>
<div class="a" style="left:730.90px;top:134.20px;width:62.70px;height:13.50px;border:1px solid #7a7a7a;border-radius:6.75px"></div>
<span class="t" style="left:752.00px;top:137.67px;font-size:7.00px;color:#f0f0f0;transform:scaleX(0.9454);transform-origin:0 0;">Cancel</span>
<div class="a" style="left:730.90px;top:156.10px;width:62.70px;height:13.90px;border:1px solid #7a7a7a;border-radius:6.95px"></div>
<span class="t" style="left:737.60px;top:159.67px;font-size:7.00px;color:#f0f0f0;transform:scaleX(0.9404);transform-origin:0 0;">Add to Swatches</span>
<div class="a" style="left:730.90px;top:178.70px;width:62.70px;height:13.90px;border:1px solid #7a7a7a;border-radius:6.95px"></div>
<span class="t" style="left:741.40px;top:182.27px;font-size:7.00px;color:#f0f0f0;transform:scaleX(0.9183);transform-origin:0 0;">Color Libraries</span>
<div class="a" style="left:679.10px;top:203.80px;width:6.40px;height:6.40px;background:#f4f4f4;border:1.8px solid #f4f4f4;border-radius:50%"></div>
<div class="a" style="left:680.90px;top:205.60px;width:2.80px;height:2.80px;background:#222;border-radius:50%"></div>
<span class="t" style="left:688.50px;top:203.93px;font-size:6.70px;color:#e4e4e4;">H:</span>
<div class="a" style="left:701.30px;top:201.70px;width:20.10px;height:10.60px;background:#474747;border:1px solid #616161"></div>
<span class="t" style="left:704.30px;top:203.57px;font-size:7.00px;color:#f0f0f0;">289</span>
<span class="t" style="left:725.20px;top:203.67px;font-size:7.00px;color:#e4e4e4;">°</span>
<div class="a" style="left:679.10px;top:218.10px;width:6.40px;height:6.40px;background:#4a4a4a;border:0.9px solid #7c7c7c;border-radius:50%"></div>
<span class="t" style="left:688.50px;top:218.23px;font-size:6.70px;color:#e4e4e4;">S:</span>
<div class="a" style="left:701.30px;top:216.00px;width:20.10px;height:10.60px;background:#474747;border:1px solid #616161"></div>
<span class="t" style="left:704.30px;top:217.87px;font-size:7.00px;color:#f0f0f0;">92</span>
<span class="t" style="left:725.20px;top:217.97px;font-size:7.00px;color:#e4e4e4;">%</span>
<div class="a" style="left:679.10px;top:232.30px;width:6.40px;height:6.40px;background:#4a4a4a;border:0.9px solid #7c7c7c;border-radius:50%"></div>
<span class="t" style="left:688.50px;top:232.43px;font-size:6.70px;color:#e4e4e4;">B:</span>
<div class="a" style="left:701.30px;top:230.20px;width:20.10px;height:10.60px;background:#474747;border:1px solid #616161"></div>
<span class="t" style="left:704.30px;top:232.07px;font-size:7.00px;color:#f0f0f0;">91</span>
<span class="t" style="left:725.20px;top:232.17px;font-size:7.00px;color:#e4e4e4;">%</span>
<div class="a" style="left:679.10px;top:249.10px;width:6.40px;height:6.40px;background:#4a4a4a;border:0.9px solid #7c7c7c;border-radius:50%"></div>
<span class="t" style="left:688.50px;top:249.23px;font-size:6.70px;color:#e4e4e4;">R:</span>
<div class="a" style="left:701.30px;top:247.00px;width:20.10px;height:10.60px;background:#474747;border:1px solid #616161"></div>
<span class="t" style="left:704.30px;top:248.87px;font-size:7.00px;color:#f0f0f0;">193</span>
<div class="a" style="left:679.10px;top:263.30px;width:6.40px;height:6.40px;background:#4a4a4a;border:0.9px solid #7c7c7c;border-radius:50%"></div>
<span class="t" style="left:688.50px;top:263.43px;font-size:6.70px;color:#e4e4e4;">G:</span>
<div class="a" style="left:701.30px;top:261.20px;width:20.10px;height:10.60px;background:#474747;border:1px solid #616161"></div>
<span class="t" style="left:704.30px;top:263.07px;font-size:7.00px;color:#f0f0f0;">18</span>
<div class="a" style="left:679.10px;top:277.80px;width:6.40px;height:6.40px;background:#4a4a4a;border:0.9px solid #7c7c7c;border-radius:50%"></div>
<span class="t" style="left:688.50px;top:277.93px;font-size:6.70px;color:#e4e4e4;">B:</span>
<div class="a" style="left:701.30px;top:275.70px;width:20.10px;height:10.60px;background:#474747;border:1px solid #616161"></div>
<span class="t" style="left:704.30px;top:277.57px;font-size:7.00px;color:#f0f0f0;">231</span>
<div class="a" style="left:740.40px;top:203.80px;width:6.40px;height:6.40px;background:#4a4a4a;border:0.9px solid #7c7c7c;border-radius:50%"></div>
<span class="t" style="left:750.50px;top:203.93px;font-size:6.70px;color:#e4e4e4;">L:</span>
<div class="a" style="left:760.80px;top:201.70px;width:24.80px;height:10.60px;background:#474747;border:1px solid #616161"></div>
<span class="t" style="left:763.80px;top:203.57px;font-size:7.00px;color:#f0f0f0;">49</span>
<div class="a" style="left:740.40px;top:218.10px;width:6.40px;height:6.40px;background:#4a4a4a;border:0.9px solid #7c7c7c;border-radius:50%"></div>
<span class="t" style="left:750.50px;top:218.23px;font-size:6.70px;color:#e4e4e4;">a:</span>
<div class="a" style="left:760.80px;top:216.00px;width:24.80px;height:10.60px;background:#474747;border:1px solid #616161"></div>
<span class="t" style="left:763.80px;top:217.87px;font-size:7.00px;color:#f0f0f0;">79</span>
<div class="a" style="left:740.40px;top:232.30px;width:6.40px;height:6.40px;background:#4a4a4a;border:0.9px solid #7c7c7c;border-radius:50%"></div>
<span class="t" style="left:750.50px;top:232.43px;font-size:6.70px;color:#e4e4e4;">b:</span>
<div class="a" style="left:760.80px;top:230.20px;width:24.80px;height:10.60px;background:#474747;border:1px solid #616161"></div>
<span class="t" style="left:763.80px;top:232.07px;font-size:7.00px;color:#f0f0f0;">-66</span>
<span class="t" style="left:752.40px;top:248.97px;font-size:7.00px;color:#e4e4e4;">C:</span>
<div class="a" style="left:761.50px;top:247.00px;width:20.00px;height:10.60px;background:#474747;border:1px solid #616161"></div>
<span class="t" style="left:764.50px;top:248.87px;font-size:7.00px;color:#f0f0f0;">45</span>
<span class="t" style="left:785.00px;top:248.97px;font-size:7.00px;color:#e4e4e4;transform:scaleX(0.9640);transform-origin:0 0;">%</span>
<span class="t" style="left:751.62px;top:263.17px;font-size:7.00px;color:#e4e4e4;">M:</span>
<div class="a" style="left:761.50px;top:261.20px;width:20.00px;height:10.60px;background:#474747;border:1px solid #616161"></div>
<span class="t" style="left:764.50px;top:263.07px;font-size:7.00px;color:#f0f0f0;">83</span>
<span class="t" style="left:785.00px;top:263.17px;font-size:7.00px;color:#e4e4e4;transform:scaleX(0.9640);transform-origin:0 0;">%</span>
<span class="t" style="left:753.17px;top:277.67px;font-size:7.00px;color:#e4e4e4;">Y:</span>
<div class="a" style="left:761.50px;top:275.70px;width:20.00px;height:10.60px;background:#474747;border:1px solid #616161"></div>
<span class="t" style="left:764.50px;top:277.57px;font-size:7.00px;color:#f0f0f0;">0</span>
<span class="t" style="left:785.00px;top:277.67px;font-size:7.00px;color:#e4e4e4;transform:scaleX(0.9640);transform-origin:0 0;">%</span>
<span class="t" style="left:752.79px;top:291.67px;font-size:7.00px;color:#e4e4e4;">K:</span>
<div class="a" style="left:761.50px;top:289.70px;width:20.00px;height:10.60px;background:#474747;border:1px solid #616161"></div>
<span class="t" style="left:764.50px;top:291.57px;font-size:7.00px;color:#f0f0f0;">0</span>
<span class="t" style="left:785.00px;top:291.67px;font-size:7.00px;color:#e4e4e4;transform:scaleX(0.9640);transform-origin:0 0;">%</span>
<span class="t" style="left:681.20px;top:294.86px;font-size:5.60px;color:#b4b4b4;">#</span>
<div class="a" style="left:688.50px;top:291.60px;width:46.70px;height:11.00px;background:#454545;border:1px solid #3a7bd0"></div>
<div class="a" style="left:690.70px;top:293.30px;width:22.80px;height:7.60px;background:#2f8af0;"></div>
<span class="t" style="left:691.40px;top:293.87px;font-size:7.00px;color:#ffffff;transform:scaleX(0.9534);transform-origin:0 0;">c112e7</span>
<div class="a" style="left:520.00px;top:270.90px;width:6.20px;height:6.20px;background:#4a4a4a;border:1px solid #7c7c7c;border-radius:1px"></div>
<span class="t" style="left:530.00px;top:270.27px;font-size:7.00px;color:#e4e4e4;transform:scaleX(0.9171);transform-origin:0 0;">Only Web Colors</span>
<!-- footer banner -->
<svg class="a" style="left:0;top:457px;overflow:hidden" width="850" height="34" viewBox="0 0 850 34"><defs><filter id="bl" x="-20%" y="-50%" width="140%" height="200%"><feGaussianBlur stdDeviation="2.2"/></filter><filter id="bs" x="-20%" y="-50%" width="140%" height="200%"><feGaussianBlur stdDeviation="0.7"/></filter>
<linearGradient id="pk" x1="0" x2="1" y1="0" y2="0"><stop offset="0" stop-color="#fce7e4"/><stop offset="0.35" stop-color="#fbdeda"/><stop offset="1" stop-color="#fad3ce"/></linearGradient>
<linearGradient id="wh" x1="0" x2="1" y1="0" y2="1"><stop offset="0" stop-color="#f5f5f5"/><stop offset="0.45" stop-color="#fdfdfd"/><stop offset="1" stop-color="#fbfafa"/></linearGradient></defs>
<rect width="850" height="35" fill="url(#wh)"/><rect width="850" height="2" fill="#ffffff"/><ellipse cx="236" cy="36" rx="4" ry="6" fill="#f9cfca" filter="url(#bs)"/>
<path d="M462 -6 L470 4 L486 8 L500 6 L512 12 L530 10 L538 20 L548 24 L556 41 L860 41 L860 -6Z" fill="url(#pk)" filter="url(#bl)"/>
<g fill="#fadad6" filter="url(#bs)"><ellipse cx="412" cy="24" rx="7" ry="8"/><ellipse cx="446" cy="20" rx="5" ry="8"/><ellipse cx="469" cy="7" rx="5" ry="5"/><ellipse cx="554" cy="21" rx="5" ry="5.5"/><ellipse cx="485" cy="13" rx="3" ry="3"/><ellipse cx="512" cy="21" rx="2" ry="4"/><ellipse cx="498" cy="17" rx="4" ry="2.5"/></g>
<text x="685" y="25.6" font-family="Liberation Serif, serif" font-style="italic" font-size="20" fill="#1c1a1a" textLength="158" lengthAdjust="spacingAndGlyphs" stroke="#1c1a1a" stroke-width="0.25"><tspan font-size="28">D</tspan>esigner: <tspan font-size="28">K</tspan>e<tspan font-size="28">ll</tspan>y <tspan font-size="28">J</tspan>anes</text></svg>
</body></html>
